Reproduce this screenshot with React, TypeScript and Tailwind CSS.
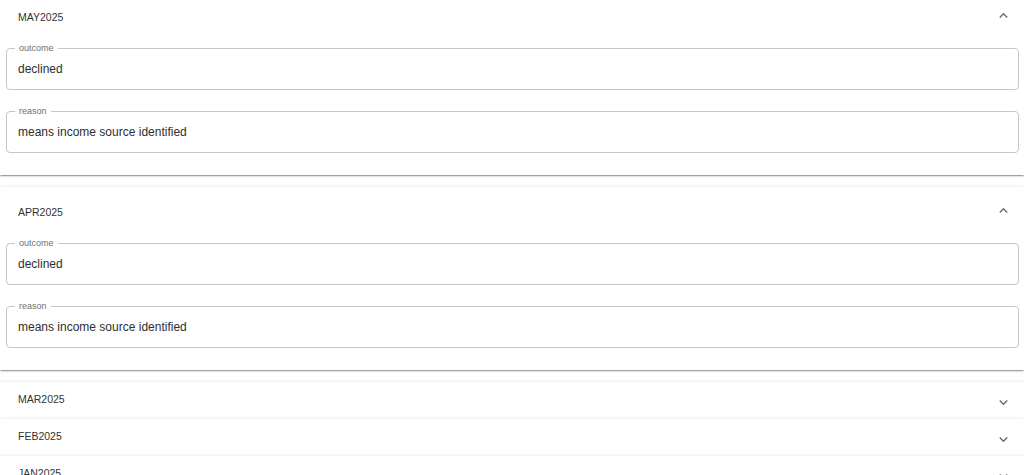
import React from "react";

type Month = {
  id: string;
  open: boolean;
  fields: { label: string; value: string }[];
};

const months: Month[] = [
  {
    id: "MAY2025",
    open: true,
    fields: [
      { label: "outcome", value: "declined" },
      { label: "reason", value: "means income source identified" },
    ],
  },
  {
    id: "APR2025",
    open: true,
    fields: [
      { label: "outcome", value: "declined" },
      { label: "reason", value: "means income source identified" },
    ],
  },
  { id: "MAR2025", open: false, fields: [] },
  { id: "FEB2025", open: false, fields: [] },
  { id: "JAN2025", open: false, fields: [] },
];

function Chevron({ up }: { up: boolean }) {
  return (
    <svg
      viewBox="0 0 24 24"
      className={`w-[17px] h-[17px] fill-[#6b6b6b] ${up ? "rotate-180" : ""}`}
    >
      <path d="M16.59 8.59 12 13.17 7.41 8.59 6 10l6 6 6-6z" />
    </svg>
  );
}

function OutlinedField({ label, value }: { label: string; value: string }) {
  return (
    <div className="relative h-[42px] rounded-[4px] border border-[#c6c6c6] flex items-center px-[11px]">
      <span className="absolute -top-[7px] left-[8px] bg-white px-[4px] text-[9px] leading-[12px] text-[#707070]">
        {label}
      </span>
      <span className="text-[12px] text-[#2e2e2e]">{value}</span>
    </div>
  );
}

export default function App() {
  const shadow =
    "shadow-[0_2px_1px_-1px_rgba(0,0,0,0.2),0_1px_1px_0_rgba(0,0,0,0.14),0_1px_3px_0_rgba(0,0,0,0.12)]";

  return (
    <div
      className="min-h-screen bg-white overflow-hidden"
      style={{ fontFamily: "'Liberation Sans', Arial, sans-serif" }}
    >
      <div className="-mt-[8px] flex flex-col">
        {months.map((m, i) =>
          m.open ? (
            <div
              key={m.id}
              className={`bg-white ${shadow} ${i > 0 ? "mt-[10px] border-t border-[#f0f4f4]" : ""} mb-[1px]`}
            >
              <div className="h-[50px] flex items-center justify-between pl-[18px] pr-[12px]">
                <span className="text-[10.5px] text-[#333333] pt-[1px]">{m.id}</span>
                <span className="-mt-[4px]">
                  <Chevron up />
                </span>
              </div>
              <div className="px-[6px] pt-[6px] pb-[22px] pr-[5px] flex flex-col gap-[21px]">
                {m.fields.map((f) => (
                  <OutlinedField key={f.label} label={f.label} value={f.value} />
                ))}
              </div>
            </div>
          ) : (
            <div
              key={m.id}
              className={`bg-white ${shadow} border-t border-[#eef5f5] ${
                i === 2 ? "mt-[10px]" : ""
              } h-[37px] shrink-0 flex items-center justify-between pl-[18px] pr-[12px]`}
            >
              <span className="text-[10.5px] text-[#333333]">{m.id}</span>
              <span className="mt-[4px]">
                <Chevron up={false} />
              </span>
            </div>
          )
        )}
      </div>
    </div>
  );
}
